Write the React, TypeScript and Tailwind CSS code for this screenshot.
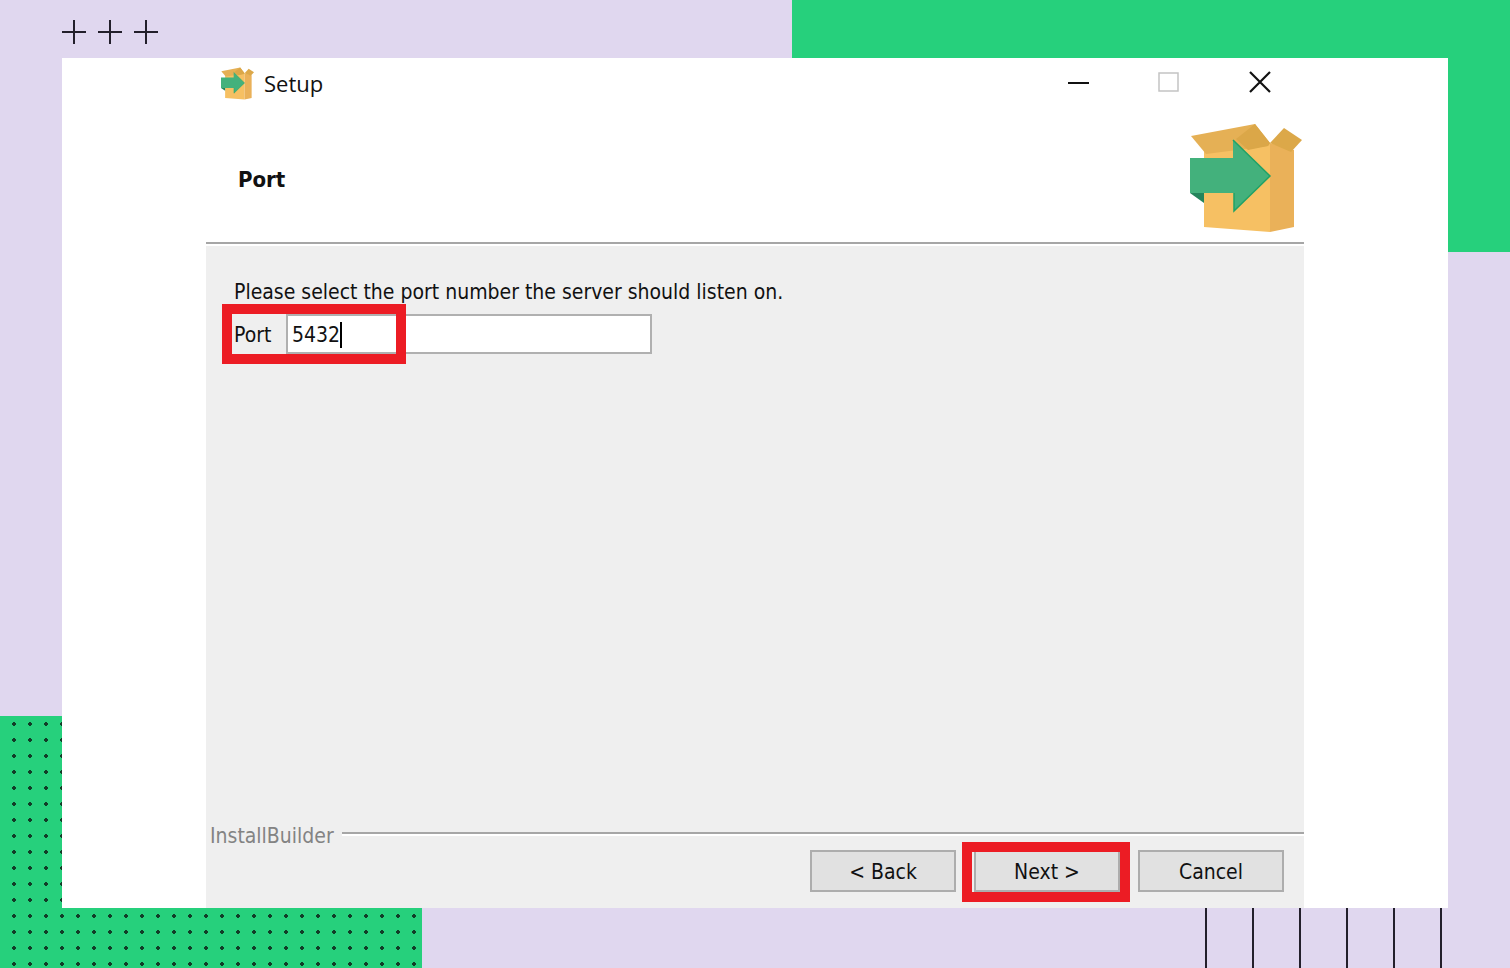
import React, { useState } from 'react';

const BoxIcon = ({ className }: { className: string }) => (
  <svg className={className} viewBox="0 0 112 108" fill="none" aria-hidden="true">
    <path d="M14 26L80 19V108L14 103Z" fill="#f6c063" />
    <path d="M80 19L104 26V103L80 108Z" fill="#eab159" />
    <path d="M1 12L65 0L80 19L78 22L16 30Z" fill="#e5b055" />
    <path d="M46 15L65 0L80 19L78 22L58 26Z" fill="#dba748" />
    <path d="M80 19L94 4L112 16L101 28Z" fill="#dca849" />
    <path d="M0 69H14V79Z" fill="#24845b" />
    <path d="M0 34H43V16L80 52L44 87V69H0Z" fill="#43b17c" />
    <path d="M43 16L80 52L44 87V69" stroke="#1fa266" strokeWidth="1.5" />
  </svg>
);

const Plus = () => (
  <svg className="w-6 h-6" viewBox="0 0 24 24" fill="none" stroke="#231f2b" strokeWidth={2}>
    <path d="M12 0V24M0 12H24" />
  </svg>
);

const WindowControls = () => (
  <div className="flex">
    <button className="w-[90px] h-[50px] flex items-center justify-center" aria-label="Minimize">
      <svg className="w-6 h-6" viewBox="0 0 24 24" fill="none" stroke="#111" strokeWidth={2}>
        <path d="M1 12H22" />
      </svg>
    </button>
    <button className="w-[90px] h-[50px] flex items-center justify-center" aria-label="Maximize" disabled>
      <svg className="w-6 h-6" viewBox="0 0 24 24" fill="none" stroke="#c4c4c4" strokeWidth={1.5}>
        <path d="M2 2H21V20H2Z" />
      </svg>
    </button>
    <button className="w-[90px] h-[50px] flex items-center justify-center" aria-label="Close">
      <svg className="w-6 h-6" viewBox="0 0 24 24" fill="none" stroke="#111" strokeWidth={2.2}>
        <path d="M3 1L23 21M23 1L3 21" />
      </svg>
    </button>
  </div>
);

const buttonClass = 'w-[146px] h-[42px] border-2 border-[#adadad] bg-[#e1e1e1] pt-0.5 text-center';

export default function App() {
  const [port, setPort] = useState('5432');

  return (
    <div className="relative isolate flex min-h-screen flex-col overflow-hidden bg-[#e0d7ef] px-[62px] font-['DejaVu_Sans_Condensed','DejaVu_Sans',sans-serif] text-[21px] leading-7 text-[#111]">
      {/* Background blocks */}
      <div className="absolute top-0 right-0 -z-10 h-[252px] w-[718px] bg-[#26d07c]" />
      <div className="absolute bottom-0 left-0 -z-10 h-[252px] w-[422px] bg-[#26d07c] bg-[radial-gradient(circle_at_8px_8px,#123d28_2px,transparent_2px)] bg-[length:16px_16px] bg-[position:6px_0px]" />

      <div className="flex h-[58px] items-center gap-3 pt-1.5">
        <Plus />
        <Plus />
        <Plus />
      </div>

      <main className="flex flex-1 flex-col bg-white px-36">
        {/* Title bar */}
        <div className="flex h-[50px] items-center justify-between pl-[15px]">
          <div className="flex items-center gap-2.5">
            <BoxIcon className="w-[33px] h-[33px]" />
            <span className="font-['Open_Sans',sans-serif] text-[22px]">Setup</span>
          </div>
          <WindowControls />
        </div>

        <header className="flex items-center justify-between border-b-2 border-[#a6a6a6] pt-4 pr-0.5 pb-2.5 pl-8">
          <h1 className="pt-1 text-[22px] font-bold">Port</h1>
          <BoxIcon className="w-[112px] h-[108px]" />
        </header>

        <form className="mt-0.5 flex flex-1 flex-col bg-[#efefef]" onSubmit={(e) => e.preventDefault()}>
          <div className="flex-1 px-7 pt-8">
            <p>Please select the port number the server should listen on.</p>
            <div className="relative mt-2 flex items-center">
              <label htmlFor="port" className="w-[52px] pt-0.5">Port</label>
              <input
                id="port"
                type="text"
                value={port}
                onChange={(e) => setPort(e.target.value)}
                className="w-[366px] h-10 border-2 border-[#b0b0b0] bg-white px-1 pt-0.5 outline-none"
              />
              <span className="absolute left-[106px] top-2 w-0.5 h-[26px] bg-black" />
              <div className="pointer-events-none absolute -left-3 -top-2.5 w-[184px] h-[60px] border-[10px] border-[#ec1c24]" />
            </div>
          </div>

          {/* Footer */}
          <div className="flex gap-2 pl-1">
            <span className="text-[#838383]">InstallBuilder</span>
            <div className="mt-2.5 h-1 flex-1 border-t-2 border-[#a6a6a6] bg-white" />
          </div>
          <div className="flex justify-end gap-[18px] pr-5 pb-4">
            <button type="button" className={buttonClass}>&lt; Back</button>
            <div className="relative">
              <button type="submit" className={buttonClass}>Next &gt;</button>
              <div className="pointer-events-none absolute -left-3 -right-2.5 -top-2 -bottom-2.5 border-[10px] border-[#ec1c24]" />
            </div>
            <button type="button" className={buttonClass}>Cancel</button>
          </div>
        </form>
      </main>

      <div className="flex h-[60px] justify-end gap-[45px] pr-1.5">
        {[0, 1, 2, 3, 4, 5].map((line) => (
          <div key={line} className="w-0.5 bg-[#231f2b]" />
        ))}
      </div>
    </div>
  );
}
